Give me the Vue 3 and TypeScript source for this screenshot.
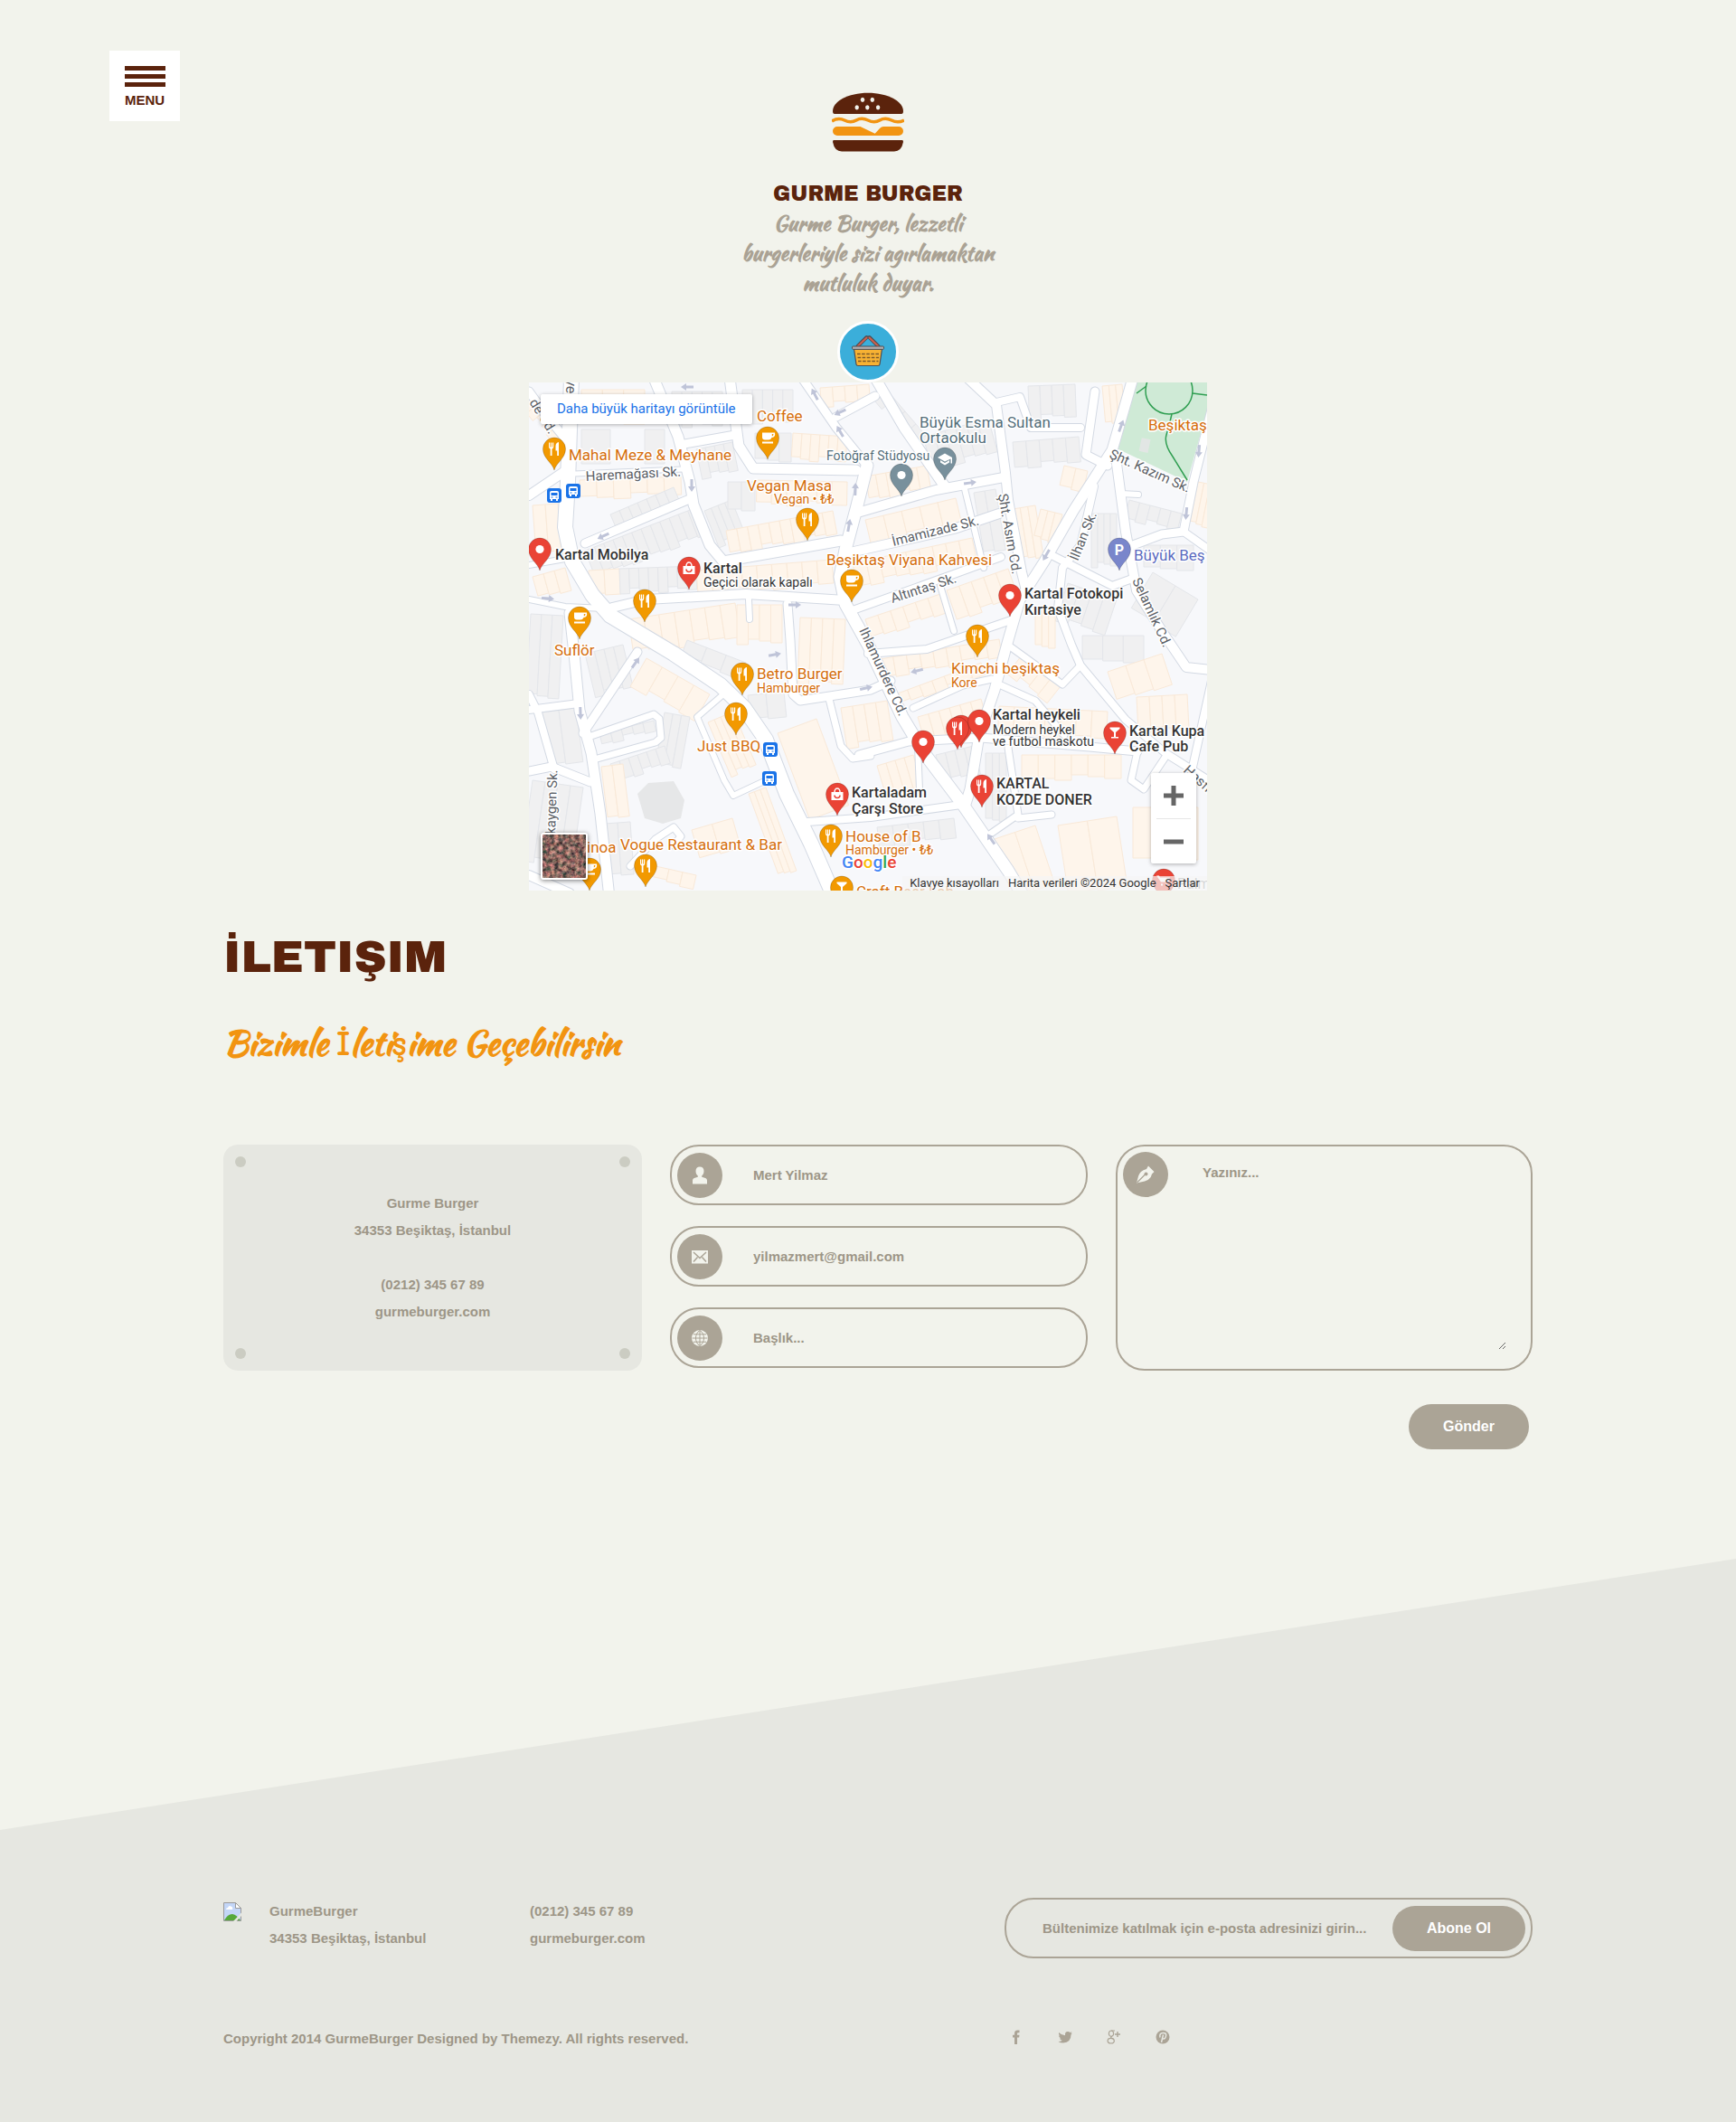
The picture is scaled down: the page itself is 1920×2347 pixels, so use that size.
<script setup lang="ts">
import { ref } from 'vue'

type Point = [number, number]
interface Road { w: number; pts: string }
interface Row { a: Point; b: Point; depth: number; n: number; tone: 'cream' | 'grey' }
interface Pin { x: number; y: number; kind: string; color: string }
interface Label { x: number; y: number; t: string; s: number; c: string; r?: number; w?: number }

const ORANGE = '#f29900'
const RED = '#ea4335'
const SLATE = '#78909c'
const VIOLET = '#7986cb'

const FOOD = '#d56e0c'
const DARK = '#333333'
const STREET = '#5b6066'
const SCHOOL = '#546e7a'

const form = ref({ name: '', email: '', subject: '', message: '' })
const newsletter = ref('')

const roads: Road[] = [
  { w: 5, pts: '50,101 170,96' },
  { w: 9, pts: '180,128 62,178' },
  { w: 10, pts: '0,125 40,98' },
  { w: 6, pts: '0,202 40,195' },
  { w: 6, pts: '0,240 40,248 84,250' },
  { w: 9, pts: '0,10 18,35 40,62' },
  { w: 11, pts: '138,-5 165,60 178,110 182,135 200,180 215,198 345,175' },
  { w: 9, pts: '172,68 228,58' },
  { w: 11, pts: '222,-5 232,70 248,95 362,97' },
  { w: 6, pts: '243,240 244,262' },
  { w: 9, pts: '302,-5 340,50 374,92' },
  { w: 9, pts: '340,38 383,15' },
  { w: 11, pts: '383,-5 415,50 460,115' },
  { w: 10, pts: '360,145 450,119 525,105' },
  { w: 10, pts: '355,188 400,178 470,162 520,145' },
  { w: 8, pts: '358,252 470,212 522,193' },
  { w: 6, pts: '482,118 503,205' },
  { w: 6, pts: '455,225 470,275' },
  { w: 10, pts: '485,-5 517,25 527,100 530,130 545,210 550,230' },
  { w: 8, pts: '517,22 543,16 555,50 610,50' },
  { w: 9, pts: '626,10 616,80 640,92' },
  { w: 10, pts: '650,90 660,165 672,230 700,275 727,315 755,318' },
  { w: 9, pts: '755,30 735,110 724,165 700,168 668,180' },
  { w: 8, pts: '724,165 755,187' },
  { w: 6, pts: '655,123 674,124' },
  { w: 8, pts: '580,192 645,225 670,216' },
  { w: 8, pts: '625,115 610,180 590,205 585,250 600,290 610,313 660,373 704,410 755,442' },
  { w: 7, pts: '610,313 590,334 532,292' },
  { w: 7, pts: '520,334 560,352 592,390' },
  { w: 9, pts: '365,412 420,397 500,393 620,403 673,408' },
  { w: 8, pts: '375,300 440,295 533,263' },
  { w: 7, pts: '425,360 480,335 512,328' },
  { w: 7, pts: '530,404 541,478 505,503' },
  { w: 7, pts: '541,482 578,478' },
  { w: 7, pts: '673,408 666,440 680,450 704,414' },
  { w: 8, pts: '755,330 733,430' },
  { w: 8, pts: '308,486 378,481 478,467' },
  { w: 6, pts: '430,402 432,450' },
  { w: 9, pts: '286,245 289,285 292,345 300,352 378,340 400,330' },
  { w: 7, pts: '332,350 345,402 358,416 378,413' },
  { w: 6, pts: '215,345 186,370 216,440 226,457 258,442' },
  { w: 9, pts: '60,388 120,298' },
  { w: 7, pts: '66,392 138,367 144,372 146,393 140,398 72,417' },
  { w: 8, pts: '0,362 55,355' },
  { w: 9, pts: '0,430 25,425 68,442' },
  { w: 8, pts: '0,345 10,365 28,428' },
  { w: 7, pts: '112,535 140,505 160,492 168,502 160,512' },
  { w: 11, pts: '45,255 50,300 56,363 69,410 79,477 89,570' },
  { w: 10, pts: '0,545 45,565' },
  { w: 11, pts: '668,-5 645,75 602,142 570,198 543,240 530,285 515,340 498,390 488,450 483,466' },
  { w: 10, pts: '92,249 130,240 240,234 350,241' },
  { w: 13, pts: '374,92 362,140 350,185 344,215 350,245 375,290 413,370 437,410 480,467 530,540 545,565' },
  { w: 16, pts: '47,-5 43,110 40,160 48,198 70,235 90,258 160,300 212,335 238,360 262,395 285,455 312,510 338,570' },
]

const rows: Row[] = [
  { a: [58, 8], b: [128, 8], depth: 40, n: 3, tone: 'cream' },
  { a: [58, 52], b: [90, 52], depth: 40, n: 1, tone: 'grey' },
  { a: [128, 52], b: [150, 52], depth: 40, n: 1, tone: 'grey' },
  { a: [158, 10], b: [214, 10], depth: 40, n: 5, tone: 'grey' },
  { a: [185, 74], b: [225, 66], depth: 34, n: 4, tone: 'grey' },
  { a: [236, 8], b: [292, 8], depth: 38, n: 5, tone: 'grey' },
  { a: [250, 56], b: [290, 56], depth: 34, n: 3, tone: 'grey' },
  { a: [292, 56], b: [352, 60], depth: 30, n: 6, tone: 'cream' },
  { a: [322, 6], b: [376, 2], depth: 22, n: 4, tone: 'cream' },
  { a: [0, 18], b: [34, 60], depth: 12, n: 5, tone: 'cream' },
  { a: [4, 136], b: [32, 134], depth: 54, n: 2, tone: 'cream' },
  { a: [56, 108], b: [168, 104], depth: 22, n: 6, tone: 'cream' },
  { a: [90, 146], b: [160, 116], depth: 22, n: 7, tone: 'grey' },
  { a: [62, 186], b: [186, 138], depth: 34, n: 12, tone: 'grey' },
  { a: [66, 208], b: [100, 206], depth: 30, n: 2, tone: 'cream' },
  { a: [100, 206], b: [185, 203], depth: 28, n: 8, tone: 'grey' },
  { a: [185, 208], b: [335, 196], depth: 28, n: 9, tone: 'cream' },
  { a: [194, 142], b: [224, 130], depth: 44, n: 4, tone: 'grey' },
  { a: [218, 164], b: [336, 142], depth: 28, n: 10, tone: 'cream' },
  { a: [220, 110], b: [250, 110], depth: 34, n: 2, tone: 'grey' },
  { a: [252, 108], b: [352, 110], depth: 28, n: 6, tone: 'cream' },
  { a: [392, 4], b: [440, 60], depth: 18, n: 4, tone: 'grey' },
  { a: [436, 60], b: [508, 40], depth: 40, n: 6, tone: 'grey' },
  { a: [372, 104], b: [440, 92], depth: 28, n: 6, tone: 'cream' },
  { a: [372, 152], b: [472, 128], depth: 30, n: 5, tone: 'cream' },
  { a: [358, 200], b: [490, 172], depth: 28, n: 9, tone: 'cream' },
  { a: [492, 122], b: [516, 118], depth: 70, n: 2, tone: 'grey' },
  { a: [372, 262], b: [455, 234], depth: 24, n: 6, tone: 'cream' },
  { a: [462, 230], b: [530, 206], depth: 36, n: 5, tone: 'cream' },
  { a: [388, 306], b: [520, 284], depth: 22, n: 9, tone: 'cream' },
  { a: [405, 345], b: [500, 310], depth: 16, n: 7, tone: 'cream' },
  { a: [430, 370], b: [500, 350], depth: 32, n: 6, tone: 'cream' },
  { a: [535, 66], b: [608, 60], depth: 30, n: 5, tone: 'grey' },
  { a: [552, 4], b: [604, 2], depth: 38, n: 4, tone: 'grey' },
  { a: [634, 4], b: [656, 2], depth: 46, n: 3, tone: 'cream' },
  { a: [592, 92], b: [618, 98], depth: 26, n: 2, tone: 'cream' },
  { a: [535, 140], b: [560, 136], depth: 60, n: 3, tone: 'cream' },
  { a: [566, 140], b: [590, 146], depth: 36, n: 3, tone: 'cream' },
  { a: [622, 145], b: [650, 145], depth: 60, n: 4, tone: 'grey' },
  { a: [664, 130], b: [722, 145], depth: 22, n: 5, tone: 'grey' },
  { a: [680, 180], b: [735, 180], depth: 30, n: 3, tone: 'grey' },
  { a: [740, 110], b: [760, 114], depth: 50, n: 3, tone: 'cream' },
  { a: [596, 222], b: [650, 240], depth: 44, n: 4, tone: 'grey' },
  { a: [690, 210], b: [740, 240], depth: 50, n: 2, tone: 'grey' },
  { a: [560, 250], b: [582, 250], depth: 46, n: 3, tone: 'cream' },
  { a: [612, 280], b: [680, 280], depth: 32, n: 3, tone: 'grey' },
  { a: [640, 320], b: [700, 300], depth: 38, n: 3, tone: 'cream' },
  { a: [545, 302], b: [588, 336], depth: 26, n: 4, tone: 'cream' },
  { a: [520, 358], b: [640, 364], depth: 32, n: 7, tone: 'cream' },
  { a: [545, 412], b: [655, 412], depth: 28, n: 6, tone: 'cream' },
  { a: [672, 348], b: [728, 345], depth: 40, n: 4, tone: 'cream' },
  { a: [450, 412], b: [492, 402], depth: 34, n: 4, tone: 'grey' },
  { a: [385, 424], b: [425, 412], depth: 38, n: 4, tone: 'cream' },
  { a: [505, 410], b: [528, 410], depth: 78, n: 3, tone: 'grey' },
  { a: [515, 505], b: [560, 490], depth: 70, n: 2, tone: 'cream' },
  { a: [585, 490], b: [650, 480], depth: 80, n: 2, tone: 'cream' },
  { a: [668, 470], b: [740, 470], depth: 60, n: 2, tone: 'cream' },
  { a: [385, 492], b: [470, 482], depth: 24, n: 5, tone: 'grey' },
  { a: [4, 215], b: [40, 205], depth: 28, n: 3, tone: 'cream' },
  { a: [2, 256], b: [38, 258], depth: 94, n: 3, tone: 'grey' },
  { a: [110, 262], b: [228, 244], depth: 40, n: 7, tone: 'cream' },
  { a: [230, 246], b: [280, 246], depth: 44, n: 4, tone: 'cream' },
  { a: [175, 285], b: [240, 310], depth: 22, n: 3, tone: 'grey' },
  { a: [62, 300], b: [104, 290], depth: 50, n: 4, tone: 'grey' },
  { a: [130, 305], b: [200, 345], depth: 36, n: 4, tone: 'cream' },
  { a: [78, 388], b: [138, 374], depth: 14, n: 5, tone: 'grey' },
  { a: [150, 365], b: [178, 370], depth: 60, n: 3, tone: 'grey' },
  { a: [90, 422], b: [150, 402], depth: 22, n: 6, tone: 'grey' },
  { a: [14, 365], b: [52, 360], depth: 62, n: 2, tone: 'grey' },
  { a: [4, 440], b: [60, 448], depth: 90, n: 4, tone: 'grey' },
  { a: [80, 425], b: [104, 422], depth: 60, n: 2, tone: 'cream' },
  { a: [84, 488], b: [112, 486], depth: 60, n: 2, tone: 'grey' },
  { a: [198, 376], b: [226, 364], depth: 66, n: 4, tone: 'cream' },
  { a: [242, 346], b: [282, 342], depth: 30, n: 2, tone: 'grey' },
  { a: [275, 388], b: [318, 372], depth: 104, n: 1, tone: 'cream' },
  { a: [243, 455], b: [262, 448], depth: 100, n: 3, tone: 'cream' },
  { a: [300, 260], b: [350, 262], depth: 74, n: 4, tone: 'cream' },
  { a: [345, 360], b: [396, 352], depth: 46, n: 4, tone: 'cream' },
  { a: [180, 495], b: [225, 482], depth: 36, n: 2, tone: 'cream' },
  { a: [140, 535], b: [185, 545], depth: 18, n: 3, tone: 'cream' },
]

/** Splits a building row into plots that step slightly in depth. */
function plots(row: Row): string[] {
  const [ax, ay] = row.a
  const [bx, by] = row.b
  const dx = bx - ax
  const dy = by - ay
  const len = Math.hypot(dx, dy)
  const nx = -dy / len
  const ny = dx / len
  return Array.from({ length: row.n }, (_, i) => {
    const s = i / row.n
    const e = (i + 1) / row.n
    const d = row.depth - ((i * 7 + row.n) % 4) * 2
    const p: Point[] = [
      [ax + dx * s, ay + dy * s],
      [ax + dx * e, ay + dy * e],
      [ax + dx * e + nx * d, ay + dy * e + ny * d],
      [ax + dx * s + nx * d, ay + dy * s + ny * d],
    ]
    return p.map(([x, y]) => `${x.toFixed(1)},${y.toFixed(1)}`).join(' ')
  })
}

const arrows: [number, number, number][] = [
  [175, 5, 180], [316, 13, -118], [344, 54, -120], [344, 33, 155], [180, 114, 90],
  [82, 170, 155], [361, 118, -88], [354, 158, -80], [294, 246, 0], [21, 239, 5],
  [488, 111, -8], [655, 48, -70], [741, 76, 95], [727, 145, 95], [572, 191, 120],
  [118, 310, -55], [272, 301, -10], [373, 338, -12], [57, 366, 88], [429, 319, 165], [511, 505, -125],
]

const pins: Pin[] = [
  { x: 264, y: 85, kind: 'cup', color: ORANGE },
  { x: 28, y: 97, kind: 'fork', color: ORANGE },
  { x: 308, y: 175, kind: 'fork', color: ORANGE },
  { x: 128, y: 265, kind: 'fork', color: ORANGE },
  { x: 56, y: 284, kind: 'cup', color: ORANGE },
  { x: 357, y: 243, kind: 'cup', color: ORANGE },
  { x: 236, y: 346, kind: 'fork', color: ORANGE },
  { x: 229, y: 390, kind: 'fork', color: ORANGE },
  { x: 496, y: 304, kind: 'fork', color: ORANGE },
  { x: 334, y: 525, kind: 'fork', color: ORANGE },
  { x: 129, y: 558, kind: 'fork', color: ORANGE },
  { x: 67, y: 562, kind: 'cup', color: ORANGE },
  { x: 346, y: 582, kind: 'glass', color: ORANGE },
  { x: 412, y: 126, kind: 'dot', color: SLATE },
  { x: 460, y: 108, kind: 'cap', color: SLATE },
  { x: 653, y: 208, kind: 'park', color: VIOLET },
  { x: 12, y: 208, kind: 'dot', color: RED },
  { x: 177, y: 229, kind: 'bag', color: RED },
  { x: 532, y: 259, kind: 'dot', color: RED },
  { x: 436, y: 421, kind: 'dot', color: RED },
  { x: 478, y: 404, kind: 'none', color: RED },
  { x: 474, y: 406, kind: 'fork', color: RED },
  { x: 498, y: 398, kind: 'dot', color: RED },
  { x: 648, y: 411, kind: 'glass', color: RED },
  { x: 501, y: 470, kind: 'fork', color: RED },
  { x: 341, y: 479, kind: 'bag', color: RED },
  { x: 702, y: 574, kind: 'cart', color: RED },
]

const stops: Point[] = [[28, 125], [49, 120], [267, 406], [266, 438]]

const labels: Label[] = [
  { x: 42, y: -4, t: 'ye', s: 16, c: STREET, r: 94 },
  { x: 0, y: 22, t: 'de Cd.', s: 15, c: STREET, r: 58 },
  { x: 252, y: 43, t: 'Coffee', s: 17, c: FOOD },
  { x: 44, y: 86, t: 'Mahal Meze & Meyhane', s: 17, c: FOOD },
  { x: 63, y: 109, t: 'Haremağası Sk.', s: 15, c: STREET, r: -3 },
  { x: 241, y: 120, t: 'Vegan Masa', s: 17, c: FOOD },
  { x: 271, y: 134, t: 'Vegan • ₺₺', s: 14, c: FOOD },
  { x: 329, y: 86, t: 'Fotoğraf Stüdyosu', s: 14, c: SCHOOL },
  { x: 432, y: 50, t: 'Büyük Esma Sultan', s: 17, c: SCHOOL },
  { x: 432, y: 67, t: 'Ortaokulu', s: 17, c: SCHOOL },
  { x: 685, y: 53, t: 'Beşiktaş', s: 17, c: FOOD },
  { x: 641, y: 83, t: 'Şht. Kazım Sk.', s: 15, c: STREET, r: 24 },
  { x: 519, y: 124, t: 'Şht. Asım Cd.', s: 15, c: STREET, r: 80 },
  { x: 403, y: 181, t: 'İmamizade Sk.', s: 15, c: STREET, r: -14 },
  { x: 402, y: 244, t: 'Altıntaş Sk.', s: 15, c: STREET, r: -18 },
  { x: 607, y: 198, t: 'İlhan Sk.', s: 15, c: STREET, r: -68 },
  { x: 667, y: 219, t: 'Selamlık Cd.', s: 15, c: STREET, r: 65 },
  { x: 365, y: 274, t: 'Ihlamurdere Cd.', s: 15, c: STREET, r: 65 },
  { x: 29, y: 500, t: 'kaygen Sk.', s: 15, c: STREET, r: -88 },
  { x: 723, y: 430, t: 'Hasfırın', s: 15, c: STREET, r: 42 },
  { x: 329, y: 202, t: 'Beşiktaş Viyana Kahvesi', s: 17, c: FOOD },
  { x: 29, y: 196, t: 'Kartal Mobilya', s: 16, c: DARK, w: 500 },
  { x: 193, y: 211, t: 'Kartal', s: 16, c: DARK, w: 500 },
  { x: 193, y: 226, t: 'Geçici olarak kapalı', s: 14, c: DARK },
  { x: 669, y: 197, t: 'Büyük Beş', s: 17, c: '#5c6bc0' },
  { x: 548, y: 239, t: 'Kartal Fotokopi', s: 16, c: DARK, w: 500 },
  { x: 548, y: 257, t: 'Kırtasiye', s: 16, c: DARK, w: 500 },
  { x: 28, y: 302, t: 'Suflör', s: 17, c: FOOD },
  { x: 252, y: 328, t: 'Betro Burger', s: 17, c: FOOD },
  { x: 252, y: 343, t: 'Hamburger', s: 14, c: FOOD },
  { x: 186, y: 408, t: 'Just BBQ', s: 17, c: FOOD },
  { x: 467, y: 322, t: 'Kimchi beşiktaş', s: 17, c: FOOD },
  { x: 467, y: 337, t: 'Kore', s: 14, c: FOOD },
  { x: 513, y: 373, t: 'Kartal heykeli', s: 16, c: DARK, w: 500 },
  { x: 513, y: 389, t: 'Modern heykel', s: 14, c: DARK },
  { x: 513, y: 402, t: 've futbol maskotu', s: 14, c: DARK },
  { x: 664, y: 391, t: 'Kartal Kupa', s: 16, c: DARK, w: 500 },
  { x: 664, y: 408, t: 'Cafe Pub', s: 16, c: DARK, w: 500 },
  { x: 517, y: 449, t: 'KARTAL', s: 16, c: DARK, w: 500 },
  { x: 517, y: 467, t: 'KOZDE DONER', s: 16, c: DARK, w: 500 },
  { x: 357, y: 459, t: 'Kartaladam', s: 16, c: DARK, w: 500 },
  { x: 357, y: 477, t: 'Çarşı Store', s: 16, c: DARK, w: 500 },
  { x: 350, y: 508, t: 'House of B', s: 17, c: FOOD },
  { x: 350, y: 522, t: 'Hamburger • ₺₺', s: 14, c: FOOD },
  { x: 101, y: 517, t: 'Vogue Restaurant & Bar', s: 17, c: FOOD },
  { x: 64, y: 520, t: 'inoa', s: 17, c: FOOD },
  { x: 362, y: 569, t: 'Craft Beer Lab', s: 17, c: FOOD },
  { x: 717, y: 560, t: 'Palm', s: 16, c: '#8d9094' },
]
</script>

<template>
  <div class="page">
    <button class="menu" type="button">
      <span class="bar"></span>
      <span class="bar"></span>
      <span class="bar"></span>
      <span class="menu-label">MENU</span>
    </button>

    <header class="brand">
      <svg class="burger" viewBox="0 0 80 66" aria-hidden="true">
        <path d="M1 21C1 10 18 .7 40 .7S79 10 79 21q0 3-2 3H3q-2 0-2-3z" fill="#5b230c" />
        <g fill="#f2f3ec">
          <ellipse cx="34" cy="8.3" rx="2.2" ry="2.6" />
          <ellipse cx="44.8" cy="8.3" rx="2.2" ry="2.6" />
          <ellipse cx="27.7" cy="16.8" rx="2.2" ry="2.6" />
          <ellipse cx="39.3" cy="16.8" rx="2.2" ry="2.6" />
          <ellipse cx="51.1" cy="16.8" rx="2.2" ry="2.6" />
        </g>
        <path d="M0 32Q7 27.500 14 31T27 31T40 31T53 31T66 31T80 31" fill="none" stroke="#f29411" stroke-width="3.600" />
        <path d="M6 38H31.500L47.700 45.800L53 40Q55 38 57 38H74a5 5 0 0 1 0 10H6a5 5 0 0 1 0-10z" fill="#f29411" />
        <path d="M2 53H78q1 0 1 2q-2 10.500-10 10.500H11Q3 65.500 1 55q0-2 1-2z" fill="#5b230c" />
      </svg>
      <p class="brand-name">GURME BURGER</p>
      <p class="tagline">Gurme Burger, lezzetli<br />burgerleriyle sizi agırlamaktan<br />mutluluk duyar.</p>
      <a class="basket" href="#order" aria-label="Sipariş">
        <svg viewBox="0 0 62 62" aria-hidden="true">
          <path d="M19.500 25L29.500 15M42.500 25L32.500 15" stroke="#4d4f55" stroke-width="4" stroke-linecap="round" />
          <path d="M19.500 25L29.500 15.500M42.500 25L32.500 15.500" stroke="#d0604c" stroke-width="2" stroke-linecap="round" />
          <path d="M15.500 28H46.500L44 45q-.3 1.500-2 1.500H20q-1.700 0-2-1.500z" fill="#f7b233" stroke="#4d4f55" stroke-width="1.200" />
          <rect x="13.500" y="25" width="35" height="3.400" rx="1" fill="#b0acae" stroke="#4d4f55" stroke-width="1" />
          <path d="M19 33.500H43M19.500 37.500H43M20 41.500H42.500" stroke="#7c5a2a" stroke-width="1.400" stroke-dasharray="3.600 1.500" />
        </svg>
      </a>
    </header>

    <section class="map" aria-label="Harita">
      <svg class="map-canvas" viewBox="0 0 750 562" font-family="Roboto, sans-serif">
        <rect width="750" height="562" fill="#f7f8fb" />
        <g v-for="(row, i) in rows" :key="'b' + i" :class="row.tone">
          <polygon v-for="p in plots(row)" :key="p" :points="p" />
        </g>
        <polygon points="120,455 132,443 160,441 172,462 168,482 148,488 128,482" fill="#e6e7e8" />
        <polygon points="666,-4 760,-4 728,110 648,72" fill="#cfead6" />
        <rect x="676" y="62" width="10" height="15" fill="#e2e6e4" transform="rotate(12 681 70)" />
        <g fill="none" stroke="#2f9e51" stroke-width="1.500">
          <circle cx="708" cy="9" r="26" />
          <path d="M672 12L683 4M734 12L750 14M711 35Q709 44 705 58Q702 68 712 82L728 108" />
        </g>
        <polyline v-for="(r, i) in roads" :key="'c' + i" :points="r.pts" class="road casing" :stroke-width="r.w + 2" />
        <polyline v-for="(r, i) in roads" :key="'r' + i" :points="r.pts" class="road" :stroke-width="r.w" />
        <path
          v-for="(a, i) in arrows" :key="'a' + i"
          d="M-7-1.500H1V-4L7 0L1 4V1.500H-7z" fill="#bfc4d8"
          :transform="`translate(${a[0]} ${a[1]}) rotate(${a[2]})`"
        />

        <g v-for="(s, i) in stops" :key="'s' + i" :transform="`translate(${s[0]} ${s[1]})`">
          <rect x="-8" y="-8" width="16" height="16" rx="3" fill="#1a73e8" />
          <path d="M-5 4V-3q0-2 2-2H3q2 0 2 2V4H4V6H2V4H-2V6H-4V4z" fill="#fff" />
          <path d="M-3.500-3H3.500V0H-3.500zM-3.500 1.500h2v1h-2zM1.500 1.500h2v1h-2z" fill="#1a73e8" />
        </g>

        <g v-for="(p, i) in pins" :key="'p' + i" :transform="`translate(${p.x} ${p.y})`">
          <path
            d="M0 0C-2-8-12.500-13-12.500-23.500A12.500 12.500 0 0 1 12.500-23.500C12.500-13 2-8 0 0z"
            :fill="p.color" stroke="#000" stroke-opacity=".18" stroke-width="1"
          />
          <g fill="#fff" transform="translate(0 -23.500)">
            <circle v-if="p.kind === 'dot'" r="4.600" />
            <path v-else-if="p.kind === 'fork'" d="M-6-7h1.200v5h.8v-5h1.200v5h.8v-5H-.8V-2.500Q-.8-.5-2.500 0V7.500H-4.300V0Q-6-.5-6-2.500zM5-7.500V7.500H3.200V2H1.500V-3Q1.500-7 5-7.500z" />
            <path v-else-if="p.kind === 'cup'" d="M-6-6H8q1 5-3.500 5.500Q3.500 2 1 2H-3Q-6 2-6-1zM4.800-4.500v2.500Q6.500-2.500 6.500-4.500zM-6 4H6V6H-6z" fill-rule="evenodd" />
            <path v-else-if="p.kind === 'glass'" d="M-5.500-6H5.500V-4.500L1-0.500V4.500H4V6H-4V4.500H-1V-.5L-5.500-4.500z" />
            <g v-else-if="p.kind === 'bag'">
              <path d="M-6.500-2.500H6.500V6.500H-6.500z" />
              <path d="M-3-2.500a3 4 0 0 1 6 0" fill="none" stroke="#fff" stroke-width="1.500" />
              <path d="M-3 1a3 3 0 0 0 6 0" fill="none" :stroke="p.color" stroke-width="1.500" />
            </g>
            <path v-else-if="p.kind === 'cap'" d="M-8-1.500L0-6L8-1.500V5H6.500V0L0 3zM-5 1.500L0 4.500L5 1.500V4L0 7L-5 4z" />
            <path v-else-if="p.kind === 'cart'" d="M-8-5h3l1 2H7L5 2H-3zM-3 4h2v2h-2zM2 4h2v2h-2z" />
            <text v-else-if="p.kind === 'park'" y="6" text-anchor="middle" font-size="16" font-weight="700">P</text>
          </g>
        </g>

        <text
          v-for="(l, i) in labels" :key="'l' + i" class="label"
          :font-size="l.s" :font-weight="l.w ?? 400" :fill="l.c"
          :transform="`translate(${l.x} ${l.y}) rotate(${l.r ?? 0})`"
        >{{ l.t }}</text>

        <text class="label" x="346" y="537" font-size="19" font-weight="500"><tspan fill="#4285f4">G</tspan><tspan fill="#ea4335">o</tspan><tspan fill="#fbbc05">o</tspan><tspan fill="#4285f4">g</tspan><tspan fill="#34a853">l</tspan><tspan fill="#ea4335">e</tspan></text>
      </svg>

      <a class="map-link" href="#map">Daha büyük haritayı görüntüle</a>
      <button class="map-thumb" type="button" aria-label="Uydu görüntüsü">
        <svg viewBox="0 0 48 48" aria-hidden="true">
          <defs>
            <filter id="roofs" x="0" y="0" width="100%" height="100%" color-interpolation-filters="sRGB">
              <feTurbulence type="fractalNoise" baseFrequency="0.22" numOctaves="3" seed="4" />
              <feColorMatrix values="1.100 0 0 0 -.02  .7 .3 0 0 -.1  .6 .2 .1 0 -.08  0 0 0 0 1" />
            </filter>
          </defs>
          <rect width="48" height="48" filter="url(#roofs)" />
        </svg>
      </button>
      <div class="map-zoom">
        <button type="button" aria-label="Yakınlaştır">
          <svg viewBox="0 0 22 22" aria-hidden="true"><path d="M8.500 0h5v8.500H22v5h-8.500V22h-5v-8.500H0v-5h8.500z" fill="#666" /></svg>
        </button>
        <button type="button" aria-label="Uzaklaştır">
          <svg viewBox="0 0 22 22" aria-hidden="true"><path d="M0 8.500h22v5H0z" fill="#666" /></svg>
        </button>
      </div>
      <div class="map-legal">
        <a href="#keys">Klavye kısayolları</a>
        <span>Harita verileri ©2024 Google</span>
        <a href="#terms">Şartlar</a>
      </div>
    </section>

    <main class="contact">
      <h1>İLETIŞIM</h1>
      <h2>Bizimle <span class="plain">İ</span>leti<span class="plain">ş</span>ime Geçebilirsin</h2>

      <form class="contact-form" @submit.prevent>
        <div class="columns">
          <address class="card">
            <i class="pin-hole tl"></i><i class="pin-hole tr"></i><i class="pin-hole bl"></i><i class="pin-hole br"></i>
            <p>Gurme Burger<br />34353 Beşiktaş, İstanbul</p>
            <p>(0212) 345 67 89<br />gurmeburger.com</p>
          </address>

          <div class="fields">
            <label class="field">
              <span class="badge">
                <svg viewBox="0 0 20 20" aria-hidden="true"><path d="M10 0.500c3 0 4.500 2 4.500 4.700 0 2.300-1 4.300-2.300 5.300v1.200l4 1.300q1.800.7 1.800 2.500V19.500H2V15.500q0-1.800 1.800-2.500l4-1.300v-1.200C6.500 9.500 5.500 7.500 5.500 5.200 5.500 2.500 7 .5 10 .5z" fill="#f2f3ec" /></svg>
              </span>
              <input v-model="form.name" type="text" placeholder="Mert Yilmaz" aria-label="Ad" />
            </label>
            <label class="field">
              <span class="badge">
                <svg viewBox="0 0 20 20" aria-hidden="true"><path d="M1 3H19V17.500H1z" fill="#f2f3ec" /><path d="M3 5L10 11.500L17 5M3 15.500L7.500 10.500M17 15.500L12.500 10.500" fill="none" stroke="#aba496" stroke-width="1.500" /></svg>
              </span>
              <input v-model="form.email" type="email" placeholder="yilmazmert@gmail.com" aria-label="E-posta" />
            </label>
            <label class="field">
              <span class="badge">
                <svg viewBox="0 0 20 20" aria-hidden="true"><circle cx="10" cy="10" r="9" fill="#f2f3ec" /><path d="M10 1.500V18.500M1.500 10H18.500M3 5.800H17M3 14.200H17M10 1.500C4 5 4 15 10 18.500M10 1.500C16 5 16 15 10 18.500" fill="none" stroke="#aba496" stroke-width="1" /></svg>
              </span>
              <input v-model="form.subject" type="text" placeholder="Başlık..." aria-label="Başlık" />
            </label>
          </div>

          <label class="field message">
            <span class="badge">
              <svg viewBox="0 0 20 20" aria-hidden="true"><path d="M0 19.500L2 12Q3.500 6 11 4L13 .5L19.500 7L17 9.500Q16 15.500 9 17.500z" fill="#f2f3ec" /><path d="M.5 19L9.500 10" stroke="#aba496" stroke-width="1.200" /><circle cx="10.500" cy="9.500" r="2" fill="#aba496" /></svg>
            </span>
            <textarea v-model="form.message" placeholder="Yazınız..." aria-label="Mesaj"></textarea>
          </label>
        </div>
        <button class="pill send" type="submit">Gönder</button>
      </form>
    </main>

    <footer class="footer">
      <div class="footer-address">
        <svg class="missing" viewBox="0 0 20 21" aria-hidden="true">
          <path d="M.5.500H13.500L19.500 6.500V20.500H.5z" fill="#c3d6f7" stroke="#9a9a9a" />
          <path d="M13.500.5V6.500H19.500z" fill="#fff" stroke="#9a9a9a" />
          <path d="M3 8q0-2 2-2q1-3 3.500-1.500Q11 5 10 8z" fill="#fff" />
          <path d="M1 20q4-7 9-7q5 1 9 7z" fill="#56a93b" />
          <path d="M11 21L20 11.500V15L14.500 21z" fill="#e6e7e1" />
        </svg>
        <p>GurmeBurger<br />34353 Beşiktaş, İstanbul</p>
      </div>
      <p>(0212) 345 67 89<br />gurmeburger.com</p>
      <form class="newsletter" @submit.prevent>
        <input v-model="newsletter" type="email" placeholder="Bültenimize katılmak için e-posta adresinizi girin..." aria-label="E-posta adresi" />
        <button class="pill" type="submit">Abone Ol</button>
      </form>
      <p class="copyright">Copyright 2014 GurmeBurger Designed by Themezy. All rights reserved.</p>
      <nav class="social" aria-label="Sosyal medya">
        <a href="#facebook" aria-label="Facebook"><svg viewBox="0 0 16 16"><path d="M6 16V8.500H4V5.700H6V4Q6 .5 9.300.5H11.500V3.200H10Q9 3.200 9 4.300V5.700H11.500L11.100 8.500H9V16z" /></svg></a>
        <a href="#twitter" aria-label="Twitter"><svg viewBox="0 0 16 16"><path d="M1 3q3 3 7 3.300Q7.500 2 11 2q1.500 0 2.500 1l2-.8-1.200 2 1.500-.4L14.500 5.500Q14.500 14 6 14.500 2.500 14.500.5 13q3 0 4.300-1.300Q2.500 11.200 2 9.500H3.300Q1 8.300 1 6.200l1.400.4Q.3 5 1 3z" /></svg></a>
        <a href="#google" aria-label="Google Plus"><svg viewBox="0 0 16 16"><g fill="none" stroke="#aba496" stroke-width="1.200"><ellipse cx="5" cy="4.200" rx="2.600" ry="3.200" /><ellipse cx="4.700" cy="12.200" rx="3.600" ry="2.800" /><path d="M5 1H9M6 7.300Q3 8.500 6.500 9.800" /></g><path d="M11.300 2h1.400v2.300H15v1.400h-2.300V8h-1.400V5.700H9V4.300h2.300z" /></svg></a>
        <a href="#pinterest" aria-label="Pinterest"><svg viewBox="0 0 16 16"><circle cx="8" cy="8" r="7.500" /><path d="M5 8.500Q4 3.500 8.300 3.500T11.500 7Q11 10 9 10T7.500 9M8.500 5.500L6.500 14" fill="none" stroke="#e6e7e1" stroke-width="1.500" /></svg></a>
      </nav>
    </footer>
  </div>
</template>

<style>
body {
  margin: 0;
  background: #f2f3ec;
}
</style>

<style scoped>
.page {
  position: relative;
  background: #f2f3ec;
  color: #9d9687;
  font: bold 15px/30px "Liberation Sans", Arial, sans-serif;
}

p, h1, h2 {
  margin: 0;
}

button {
  border: 0;
  padding: 0;
  font: inherit;
  cursor: pointer;
}

.menu {
  position: absolute;
  left: 121px;
  top: 56px;
  width: 78px;
  height: 78px;
  padding: 17px 16px 0 17px;
  background: #fff;
  color: #5b230c;
  display: flex;
  flex-direction: column;
  gap: 4px;
  text-align: left;
}

.bar {
  height: 5px;
  flex: none;
  background: #5b230c;
}

.menu-label {
  margin-top: 1px;
  line-height: 20px;
}

.brand {
  display: flex;
  flex-direction: column;
  align-items: center;
  padding-top: 102px;
  text-align: center;
}

.burger {
  width: 80px;
  height: 66px;
  margin-bottom: 32px;
}

.brand-name {
  color: #5b230c;
  font: 400 23px/30px "Archivo Black", "Liberation Sans", sans-serif;
}

.tagline {
  color: #aaa294;
  font: bold 23px/33px "Kaushan Script", Lato, sans-serif;
}

.basket {
  box-sizing: border-box;
  width: 68px;
  height: 68px;
  margin-top: 26px;
  border: 3px solid #fff;
  border-radius: 50%;
  background: #3baeda;
}

.basket svg {
  display: block;
}

.map {
  position: relative;
  width: 750px;
  max-width: 100%;
  margin: 0 auto;
  overflow: hidden;
  font-family: Roboto, sans-serif;
  font-weight: 400;
}

.map-canvas {
  display: block;
  width: 100%;
}

.cream {
  fill: #fef5eb;
  stroke: #f9e9d8;
}

.grey {
  fill: #f0f0f1;
  stroke: #e4e6ea;
}

.road {
  fill: none;
  stroke: #fff;
  stroke-linejoin: round;
  stroke-linecap: round;
}

.casing {
  stroke: #d3d9e3;
}

.label {
  paint-order: stroke;
  stroke: #fff;
  stroke-width: 3px;
  stroke-linejoin: round;
}

.map-link {
  position: absolute;
  left: 13px;
  top: 13px;
  padding: 0 18px;
  border-radius: 2px;
  background: #fff;
  box-shadow: 0 1px 4px rgba(0, 0, 0, .3);
  color: #1a73e8;
  font-size: 15px;
  line-height: 33px;
  text-decoration: none;
}

.map-thumb {
  position: absolute;
  left: 13px;
  bottom: 12px;
  width: 52px;
  height: 52px;
  border: 2px solid #fff;
  border-radius: 3px;
  box-shadow: 0 1px 5px rgba(0, 0, 0, .5);
  overflow: hidden;
}

.map-thumb svg {
  display: block;
}

.map-zoom {
  position: absolute;
  right: 12px;
  bottom: 30px;
  width: 50px;
  border-radius: 2px;
  background: #fff;
  box-shadow: 0 1px 4px rgba(0, 0, 0, .3);
}

.map-zoom button {
  display: grid;
  place-items: center;
  width: 38px;
  height: 50px;
  margin: 0 6px;
  background: none;
}

.map-zoom button + button {
  border-top: 1px solid #e6e6e6;
}

.map-zoom svg {
  width: 22px;
  height: 22px;
}

.map-legal {
  position: absolute;
  right: 0;
  bottom: 0;
  display: flex;
  gap: 10px;
  padding: 0 8px;
  background: rgba(245, 245, 245, .7);
  color: #333;
  font-size: 13px;
  line-height: 16px;
}

.map-legal a {
  color: inherit;
  text-decoration: none;
}

.contact {
  padding: 44px 225px 121px 247px;
}

h1 {
  color: #5b230c;
  font: 400 50px/60px "Archivo Black", "Liberation Sans", sans-serif;
}

h2 {
  margin-top: 45px;
  color: #f29411;
  font: bold 38px/40px "Kaushan Script", Lato, sans-serif;
}

.plain {
  font-family: "Comic Sans MS", "Comic Neue", "Comic Relief", cursive;
  line-height: 1;
}

.contact-form {
  display: flex;
  flex-direction: column;
  margin-top: 92px;
}

.columns {
  display: grid;
  grid-template-columns: 463fr 462fr 461fr;
  gap: 31px;
}

.card {
  position: relative;
  display: flex;
  flex-direction: column;
  justify-content: center;
  gap: 30px;
  min-height: 250px;
  border-radius: 16px;
  background: #e6e7e1;
  font-style: normal;
  text-align: center;
}

.pin-hole {
  position: absolute;
  width: 12px;
  height: 12px;
  border-radius: 50%;
  background: #cbccc2;
}

.tl, .tr { top: 13px; }
.bl, .br { bottom: 13px; }
.tl, .bl { left: 13px; }
.tr, .br { right: 13px; }

.fields {
  display: flex;
  flex-direction: column;
  gap: 23px;
}

.field {
  box-sizing: border-box;
  display: flex;
  align-items: center;
  gap: 34px;
  height: 67px;
  padding: 0 34px 0 6px;
  border: 2px solid #aba496;
  border-radius: 32px;
}

.badge {
  flex: none;
  display: grid;
  place-items: center;
  width: 50px;
  height: 50px;
  border-radius: 50%;
  background: #aba496;
}

.badge svg {
  width: 20px;
  height: 20px;
}

input, textarea {
  flex: 1;
  min-width: 0;
  padding: 0;
  border: 0;
  outline: 0;
  background: none;
  color: #9d9687;
  font: inherit;
}

input::placeholder, textarea::placeholder {
  color: #9d9687;
  opacity: 1;
}

.message {
  align-items: flex-start;
  gap: 38px;
  height: auto;
  padding: 6px 27px 21px 6px;
}

.message textarea {
  align-self: stretch;
  padding-top: 8px;
  resize: both;
}

.pill {
  height: 50px;
  border-radius: 25px;
  background: #aba496;
  color: #fff;
  font-size: 16px;
}

.send {
  align-self: flex-end;
  width: 133px;
  margin: 37px 4px 0 0;
}

.footer {
  display: grid;
  grid-template-columns: 339fr 525fr 584fr;
  row-gap: 74px;
  padding: 375px 225px 77px 247px;
  background: #e6e7e1;
  clip-path: polygon(0 300px, 100% 0, 100% 100%, 0 100%);
}

.footer-address {
  display: flex;
  align-items: flex-start;
  gap: 31px;
}

.missing {
  width: 20px;
  height: 21px;
  margin-top: 5px;
}

.newsletter {
  box-sizing: border-box;
  display: flex;
  align-items: center;
  height: 67px;
  padding: 0 6px 0 40px;
  border: 2px solid #aba496;
  border-radius: 32px;
}

.newsletter .pill {
  width: 147px;
}

.copyright {
  grid-column: span 2;
}

.social {
  display: flex;
  align-items: center;
  gap: 38px;
  padding: 0 0 4px 5px;
}

.social svg {
  display: block;
  width: 16px;
  height: 16px;
  fill: #aba496;
}
</style>
